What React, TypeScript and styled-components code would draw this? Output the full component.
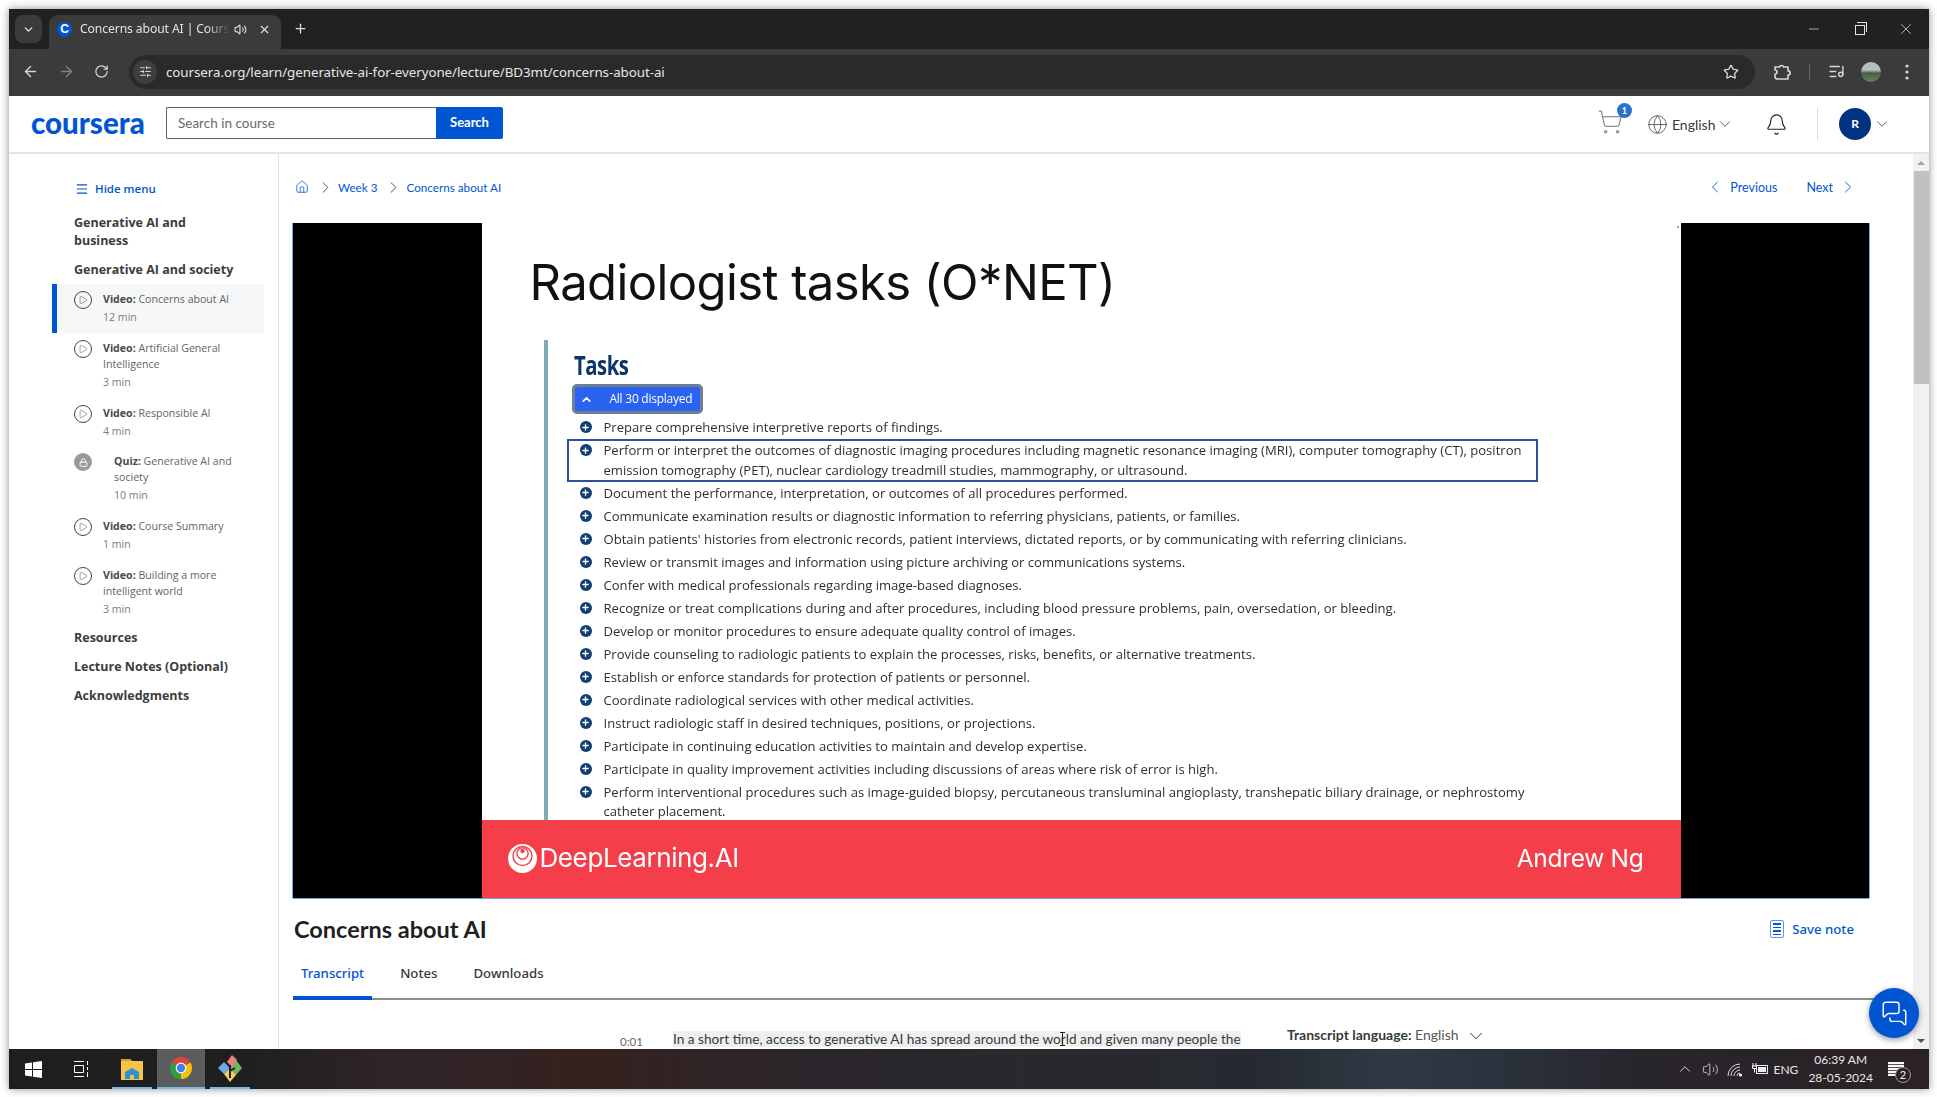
import React from "react";
import styled, { createGlobalStyle } from "styled-components";
import {
  ArrowLeft,
  ArrowRight,
  RotateCw,
  Star,
  ChevronDown,
  ChevronUp,
  ChevronLeft,
  ChevronRight,
  Bell,
  Globe,
  ShoppingCart,
  Home,
  Menu,
  Plus,
  X,
  Minus,
  Volume2,
  SlidersHorizontal,
  ListMusic,
  MessagesSquare,
  Lock,
  Play,
} from "lucide-react";

const UI_FONT = `"Lato", "Noto Sans", sans-serif`;
const SIDE_FONT = `"Open Sans", "Noto Sans", sans-serif`;

const GlobalStyle = createGlobalStyle`
  html, body { margin: 0; padding: 0; background: #fff; overflow: hidden; }
  * { box-sizing: border-box; }
`;

// Window frame
const Desktop = styled.div`
  width: 1937px;
  height: 1097px;
  padding: 9px 8px 8px 9px;
  background: #fff;
`;

const Win = styled.div`
  position: relative;
  width: 1920px;
  height: 1080px;
  display: flex;
  flex-direction: column;
  overflow: hidden;
  box-shadow: 0 0 8px rgba(0, 0, 0, 0.45);
  font-family: ${UI_FONT};
`;

// Chrome browser parts
const TabStrip = styled.div`
  height: 40px;
  flex: none;
  background: #202222;
  display: flex;
  align-items: flex-start;
  padding: 6px 0 0 6px;
  color: #e3e3e3;
`;

const TabMenu = styled.div`
  width: 27px;
  height: 28px;
  border-radius: 8px;
  background: #3b3b3b;
  display: flex;
  align-items: center;
  justify-content: center;
`;

const Tab = styled.div`
  width: 232px;
  height: 34px;
  margin-left: 7px;
  background: #3b3b3b;
  border-radius: 9px 9px 0 0;
  display: flex;
  align-items: center;
  padding: 0 8px 6px;
`;

const Favicon = styled.span`
  width: 15px;
  height: 15px;
  border-radius: 50%;
  background: #0056d2;
  color: #fff;
  font: 700 12px/15px "Liberation Sans", sans-serif;
  text-align: center;
  flex: none;
`;

const TabTitle = styled.span`
  margin-left: 8px;
  width: 150px;
  font: 12.2px/16px "Noto Sans", sans-serif;
  letter-spacing: -0.12px;
  white-space: nowrap;
  overflow: hidden;
  mask-image: linear-gradient(90deg, #000 85%, transparent);
`;

const TabIcons = styled.div`
  display: flex;
  align-items: center;
  gap: 11px;
  margin-left: 4px;
`;

const NewTab = styled.div`
  margin: 6px 0 0 12px;
  display: flex;
`;

const WinControls = styled.div`
  margin-left: auto;
  display: flex;
  align-items: center;
  height: 28px;
`;

const WinSlot = styled.span`
  width: 46px;
  display: flex;
  align-items: center;
  justify-content: center;
`;

const RestoreIcon = styled.span`
  position: relative;
  width: 10px;
  height: 10px;
  margin-top: 2px;
  border: 1px solid #e3e3e3;
  &::after {
    content: "";
    position: absolute;
    left: 1px;
    top: -4px;
    width: 9px;
    height: 9px;
    border-top: 1px solid #e3e3e3;
    border-right: 1px solid #e3e3e3;
  }
`;

const Toolbar = styled.div`
  height: 47px;
  flex: none;
  background: #3b3b3b;
  display: flex;
  align-items: center;
  padding: 0 0 2px 13px;
  color: #d6d6d6;
`;

const NavButton = styled.span<{ $dim?: boolean }>`
  width: 36px;
  display: flex;
  justify-content: flex-start;
  opacity: ${({ $dim }) => ($dim ? 0.45 : 1)};
`;

const Omnibox = styled.div`
  width: 1626px;
  height: 34px;
  margin-left: -1px;
  border-radius: 17px;
  background: #2a2a2a;
  display: flex;
  align-items: center;
  padding: 0 16px 0 4px;
`;

const SiteInfo = styled.span`
  width: 24px;
  height: 24px;
  border-radius: 50%;
  background: #3e3e3e;
  display: flex;
  align-items: center;
  justify-content: center;
  flex: none;
`;

const Url = styled.span`
  margin-left: 9px;
  flex: 1;
  font: 13.35px/20px "Noto Sans", sans-serif;
  letter-spacing: -0.06px;
  color: #e6e6e6;
`;

const ToolIcons = styled.div`
  display: flex;
  align-items: center;
  margin-left: 18px;
`;

const ToolDivider = styled.span`
  width: 1px;
  height: 16px;
  background: #666;
  margin: 0 18px 0 18px;
`;

const ProfilePic = styled.span`
  width: 20px;
  height: 20px;
  border-radius: 50%;
  margin: 0 23.5px 0 16px;
  background: linear-gradient(180deg, #b5c0bc 0 40%, #4d5a50 55%, #5d8d48 100%);
`;

// Coursera header
const SiteHeader = styled.header`
  height: 58px;
  flex: none;
  display: flex;
  align-items: center;
  background: #fff;
  border-bottom: 2px solid #e4e4e4;
  padding: 0 0 2px 22px;
`;

const Logo = styled.span`
  width: 135px;
  font: 900 29.5px/30px "Lato", sans-serif;
  letter-spacing: 0;
  color: #0056d2;
`;

const SearchBox = styled.div`
  width: 270px;
  height: 32px;
  border: 1px solid #636363;
  border-right: none;
  border-radius: 2px 0 0 2px;
  padding-left: 11px;
  font-size: 13.5px;
  line-height: 30px;
  color: #6a6a6a;
`;

const SearchButton = styled.div`
  width: 67px;
  height: 32px;
  background: #0056d2;
  border-radius: 0 2px 2px 0;
  color: #fff;
  text-align: center;
  font-size: 13px;
  font-weight: 700;
  line-height: 31px;
`;

const HeaderRight = styled.div`
  margin: 2px 0 0 auto;
  display: flex;
  align-items: center;
  color: #373a3c;
`;

const CartWrap = styled.div`
  position: relative;
  display: flex;
  margin: -5px 24px 0 0;
`;

const CartBadge = styled.span`
  position: absolute;
  right: -9px;
  top: -6px;
  width: 15px;
  height: 15px;
  border-radius: 50%;
  background: #2a73cc;
  color: #fff;
  font-size: 9px;
  font-weight: 700;
  line-height: 15px;
  text-align: center;
`;

const LangLabel = styled.span`
  margin: 0 0.5px 0 4px;
  font-size: 14px;
`;

const HeaderGap = styled.span`
  width: 31px;
`;

const HeaderDivider = styled.span`
  width: 1px;
  height: 32px;
  background: #dcdcdc;
  margin: 0 21px 0 29px;
`;

const UserAvatar = styled.span`
  width: 32px;
  height: 32px;
  border-radius: 50%;
  background: #00337f;
  color: #fff;
  font-size: 12px;
  font-weight: 700;
  line-height: 32px;
  text-align: center;
  margin-right: 2px;
`;

const UserChevron = styled.span`
  display: flex;
  margin-right: 38px;
`;

// Main area
const Main = styled.main`
  flex: 1;
  min-height: 0;
  display: flex;
  background: #fff;
  overflow: hidden;
`;

const Sidebar = styled.aside`
  width: 270px;
  flex: none;
  border-right: 1px solid #e1e1e1;
  padding: 26px 0 0 43px;
  font-family: ${SIDE_FONT};
  color: #373a3c;
`;

const HideMenu = styled.div`
  display: flex;
  align-items: center;
  gap: 6px;
  margin: 0 0 16px 23px;
  font-size: 11.5px;
  font-weight: 600;
  line-height: 18px;
  color: #0056d2;
`;

const SectionTitle = styled.div<{ $after?: number }>`
  width: 195px;
  margin: 0 0 ${({ $after }) => $after ?? 11}px 22px;
  font-size: 12.5px;
  font-weight: 700;
  line-height: 18px;
  color: #3c3c3c;
`;

const Item = styled.div<{ $active?: boolean; $quiz?: boolean }>`
  width: 212px;
  display: flex;
  padding: ${({ $quiz }) => ($quiz ? 6 : 7)}px 8px 6px 17px;
  background: ${({ $active }) => ($active ? "#f5f7f8" : "transparent")};
  border-left: 5px solid ${({ $active }) => ($active ? "#0056d2" : "transparent")};
`;

const ItemIcon = styled.span<{ $quiz?: boolean }>`
  width: ${({ $quiz }) => ($quiz ? 40 : 29)}px;
  flex: none;
`;

const PlayRing = styled.span`
  width: 18px;
  height: 18px;
  border: 1px solid #444;
  border-radius: 50%;
  display: flex;
  align-items: center;
  justify-content: center;
  color: #444;
`;

const LockDot = styled.span`
  width: 18px;
  height: 18px;
  border-radius: 50%;
  background: #9a9a9a;
  display: flex;
  align-items: center;
  justify-content: center;
`;

const ItemTitle = styled.div`
  font-size: 10.6px;
  line-height: 16px;
  color: #636363;
  b {
    font-weight: 700;
    color: #4a4a4a;
  }
`;

const ItemTime = styled.div`
  font-size: 10.6px;
  line-height: 20px;
  color: #7c7c7c;
`;

const ResourceList = styled.div`
  margin-top: 4px;
`;

const Content = styled.section`
  flex: 1;
  min-width: 0;
  padding: 22px 0 0 14px;
  overflow: hidden;
`;

const Crumbs = styled.nav`
  height: 22px;
  width: 1565px;
  display: flex;
  align-items: center;
  font-size: 11.7px;
  color: #0056d2;
  margin-bottom: 25px;
`;

const HomeLink = styled.span`
  display: flex;
  margin-left: 2px;
`;

const CrumbLink = styled.span`
  white-space: nowrap;
`;

const CrumbSep = styled.span`
  color: #333;
  display: flex;
  margin: 0 3.5px 0 6.5px;
`;

const Pager = styled.div`
  margin-left: auto;
  display: flex;
  align-items: center;
  gap: 5px;
  font-size: 12.5px;
`;

const PagerGap = styled.span`
  margin-right: 24px;
`;

// Video with its slide
const Video = styled.div`
  width: 1576px;
  height: 675px;
  display: flex;
  background: #000;
  box-shadow: -1px 0 0 #7aa5ee, 1px 0 0 #7aa5ee, 0 1px 0 #7aa5ee;
`;

const Pillar = styled.div`
  flex: 1;
`;

const Slide = styled.div`
  position: relative;
  width: 1199px;
  height: 675px;
  flex: none;
  display: flex;
  flex-direction: column;
  background: #fff;
  overflow: hidden;
  filter: blur(0.3px);
  &::after {
    content: "";
    position: absolute;
    right: 2px;
    top: 3px;
    width: 2px;
    height: 2px;
    background: #e8935a;
  }
`;

const SlideBody = styled.div`
  flex: 1;
  min-height: 0;
  overflow: hidden;
  padding: 30px 0 0 48px;
`;

const SlideTitle = styled.h1`
  margin: 0 0 27px;
  font: 400 49px/60px "Inter", sans-serif;
  letter-spacing: -0.6px;
  color: #111;
`;

const TaskPanel = styled.div`
  margin-left: 14px;
  height: 480px;
  border-left: 4px solid #7fabb6;
  padding: 8px 0 0 26px;
`;

const TasksHeading = styled.div`
  font: 700 27px/34px "Open Sans", sans-serif;
  letter-spacing: -0.6px;
  color: #0b356b;
  transform: scaleX(0.75);
  transform-origin: left center;
`;

const DisplayedButton = styled.div`
  width: 131px;
  height: 30px;
  margin: 2px 0 4px -2px;
  display: flex;
  align-items: center;
  gap: 17px;
  padding-left: 5px;
  background: #2a62f2;
  border: 3px solid #6d7f92;
  border-radius: 5px;
  color: #fff;
  font: 12px/16px "Open Sans", sans-serif;
  letter-spacing: -0.25px;
`;

const TaskList = styled.ul`
  list-style: none;
  margin: 0 0 0 -5px;
  padding: 0;
  display: flex;
  flex-direction: column;
  gap: 3.3px;
`;

const TaskRow = styled.li<{ $boxed?: boolean }>`
  width: 967px;
  display: flex;
  gap: 12px;
  padding-left: 11px;
  font: 13.08px/19.7px "Open Sans", sans-serif;
  color: #2e2e2e;
  white-space: pre-line;
  outline: ${({ $boxed }) => ($boxed ? "2px solid #2f4fa5" : "none")};
`;

const Bullet = styled.span`
  width: 12px;
  height: 12px;
  margin-top: 3px;
  flex: none;
  border-radius: 50%;
  background: #123f76;
  color: #fff;
  display: flex;
  align-items: center;
  justify-content: center;
`;

const SlideFooter = styled.div`
  height: 78px;
  flex: none;
  background: #f43f4b;
  display: flex;
  align-items: center;
  justify-content: space-between;
  padding: 0 37px 2px 26px;
  color: #fff;
`;

const Brand = styled.div`
  display: flex;
  align-items: center;
  gap: 3px;
  font: 400 26px/34px "Inter", sans-serif;
  letter-spacing: -0.4px;
`;

const Presenter = styled.div`
  font: 400 24.5px/34px "Inter", sans-serif;
  letter-spacing: -0.3px;
`;

// Below the video
const TitleRow = styled.div`
  width: 1561px;
  margin-top: 16px;
  height: 33px;
  display: flex;
  align-items: center;
  justify-content: space-between;
`;

const LectureTitle = styled.h2`
  margin: 0 0 3px 1px;
  font-size: 23.5px;
  font-weight: 700;
  line-height: 32px;
  color: #1f1f1f;
`;

const SaveNote = styled.div`
  display: flex;
  align-items: center;
  gap: 8px;
  margin-bottom: 3px;
  font: 500 13.2px/20px "Noto Sans", sans-serif;
  color: #0056d2;
`;

const NoteIcon = styled.span`
  width: 14px;
  height: 18px;
  border: 1px solid #5f97e6;
  border-radius: 2px;
  display: flex;
  flex-direction: column;
  align-items: center;
  justify-content: center;
  gap: 2px;
  i {
    width: 8px;
    height: 1.5px;
    background: #0056d2;
  }
`;

const TabBar = styled.div`
  width: 1582px;
  display: flex;
  border-bottom: 2px solid #8d8d8d;
  height: 53px;
`;

const PageTab = styled.div<{ $active?: boolean }>`
  height: 53px;
  margin-right: 20px;
  padding: 16px 8px 0;
  font: 500 13.2px/20px "Noto Sans", sans-serif;
  color: ${({ $active }) => ($active ? "#0056d2" : "#373a3c")};
  border-bottom: 4px solid ${({ $active }) => ($active ? "#0056d2" : "transparent")};
`;

const TranscriptRow = styled.div`
  display: flex;
  padding: 23px 0 0 327px;
`;

const Stamp = styled.span`
  width: 53px;
  margin-top: 9px;
  font-size: 11.5px;
  line-height: 20px;
  color: #666;
`;

const TranscriptLine = styled.p`
  width: 580px;
  margin: 6px 0 0;
  font-size: 13.65px;
  line-height: 20px;
  color: #373a3c;
  span {
    background: #efefef;
  }
`;

const LanguagePick = styled.div`
  margin: 2px 0 0 34px;
  display: flex;
  align-items: flex-start;
  gap: 6px;
  font-size: 14px;
  line-height: 20px;
  color: #555;
  white-space: nowrap;
  b {
    font-weight: 700;
    color: #373a3c;
  }
`;

const Scrollbar = styled.div`
  width: 16px;
  flex: none;
  background: #f1f1f1;
  display: flex;
  flex-direction: column;
  justify-content: space-between;
`;

const ScrollTop = styled.div`
  display: flex;
  flex-direction: column;
`;

const ScrollArrow = styled.span<{ $down?: boolean }>`
  height: 17px;
  display: flex;
  align-items: center;
  justify-content: center;
  &::before {
    content: "";
    border-left: 4px solid transparent;
    border-right: 4px solid transparent;
    ${({ $down }) =>
      $down ? "border-top: 4px solid #505050;" : "border-bottom: 4px solid #a3a3a3;"}
  }
`;

const ScrollThumb = styled.span`
  height: 213px;
  margin-left: 1px;
  background: #c1c1c1;
`;

const ChatFab = styled.div`
  position: absolute;
  right: 10px;
  bottom: 51px;
  width: 50px;
  height: 50px;
  border-radius: 50%;
  background: #0056d2;
  color: #fff;
  display: flex;
  align-items: center;
  justify-content: center;
  box-shadow: 0 2px 6px rgba(0, 0, 0, 0.4);
`;

const TextCursor = styled.span`
  position: absolute;
  left: 1053px;
  top: 1023px;
  width: 1px;
  height: 14px;
  background: #222;
  &::before,
  &::after {
    content: "";
    position: absolute;
    left: -2px;
    width: 5px;
    height: 1px;
    background: #222;
  }
  &::before {
    top: 0;
  }
  &::after {
    bottom: 0;
  }
`;

// Windows taskbar
const Taskbar = styled.footer`
  height: 40px;
  flex: none;
  display: flex;
  align-items: center;
  position: relative;
  z-index: 1;
  background: linear-gradient(
    90deg,
    #1d1e1f 0%,
    #1f1f20 12%,
    #2f2429 20%,
    #35211f 30%,
    #2b262b 42%,
    #28292e 55%,
    #262a30 65%,
    #2f3a46 72%,
    #2b3540 76%,
    #28252b 85%,
    #2a2226 100%
  );
  color: #f0f0f0;
`;

const StartSlot = styled.span`
  width: 48px;
  height: 40px;
  display: flex;
  align-items: center;
  justify-content: center;
`;

const Apps = styled.div`
  display: flex;
  gap: 5px;
  margin-left: 7px;
`;

const AppSlot = styled.span<{ $active?: boolean }>`
  width: ${({ $active }) => ($active ? 48 : 40)}px;
  height: 40px;
  display: flex;
  align-items: center;
  justify-content: center;
  background: ${({ $active }) => ($active ? "#5b5c5e" : "transparent")};
  border-bottom: 2px solid #76b9ed;
`;

const Tray = styled.div`
  margin-left: auto;
  display: flex;
  align-items: center;
  height: 40px;
  color: #e8e8e8;
`;

const TrayIcons = styled.div`
  display: flex;
  align-items: center;
  gap: 8px;
  margin-right: 6px;
`;

const TrayLang = styled.span`
  font-size: 12px;
  margin-right: 10px;
`;

const Clock = styled.div`
  font-size: 12px;
  line-height: 18px;
  text-align: center;
`;

const NotifyWrap = styled.div`
  position: relative;
  margin: 0 25px 0 15px;
  width: 16px;
  height: 14px;
  background: repeating-linear-gradient(180deg, #f4f4f4 0 2px, #555 2px 3px);
`;

const NotifyCount = styled.span`
  position: absolute;
  left: 7px;
  top: 5px;
  width: 16px;
  height: 16px;
  border-radius: 50%;
  border: 1px solid #999;
  background: #2b2226;
  font-size: 11px;
  line-height: 14px;
  text-align: center;
  color: #f0f0f0;
`;

const ExtensionIcon = () => (
  <svg width="18" height="18" viewBox="0 0 18 18" fill="none" stroke="currentColor" strokeWidth="1.6" strokeLinejoin="round">
    <path d="M2 4h4.4a2.2 2.2 0 0 1 4.2 0H15v3.9a2.1 2.1 0 0 1 0 4.2V16H4.6A2.6 2.6 0 0 1 2 13.4V11a2 2 0 0 0 0-4z" />
  </svg>
);

const NetworkIcon = () => (
  <svg width="16" height="16" viewBox="0 0 16 16" fill="none" stroke="#d8d8d8" strokeWidth="1">
    <path d="M1 15A12 12 0 0 1 13 3M4 15a9 9 0 0 1 9-9M7 15a6 6 0 0 1 6-6M10 15a3 3 0 0 1 3-3" />
    <circle cx="13.5" cy="14" r="1.5" fill="#fff" stroke="none" />
  </svg>
);

const BatteryIcon = () => (
  <svg width="17" height="16" viewBox="0 0 17 16" fill="none" stroke="#eee" strokeWidth="1">
    <rect x="5.5" y="4.5" width="11" height="8" />
    <rect x="7" y="6" width="8" height="5" fill="#eee" stroke="none" />
    <path d="M1 5h5M2 2v3M5 2v3M1.5 5v2.5h4V5M3.5 7.5v4" stroke="#fff" />
  </svg>
);

const WindowsLogo = () => (
  <svg width="17" height="17" viewBox="0 0 17 17" fill="#fff">
    <path d="M0 2.4 7 1.4V8H0zM8 1.2 17 0V8H8zM0 9h7v6.6L0 14.6zM8 9h9v8l-9-1.2z" />
  </svg>
);

const TaskViewIcon = () => (
  <svg width="16" height="18" viewBox="0 0 16 18" fill="none" stroke="#fff" strokeWidth="1">
    <path d="M1 1.5h10M1 16.5h10M1.5 5.5h9v7h-9zM14.5 1v4M14.5 7v3M14.5 12v5" />
  </svg>
);

const ExplorerIcon = () => (
  <svg width="22" height="24" viewBox="0 0 22 24">
    <path d="M0 3h9l2 2h11v19H0z" fill="#f6c445" />
    <path d="M0 3h9l2 2H0z" fill="#d99a25" />
    <path d="M4 23v-7l7-4 7 4v7h-5v-4H9v4z" fill="#2f8fd8" />
  </svg>
);

const ChromeIcon = () => (
  <svg width="24" height="24" viewBox="0 0 24 24">
    <path d="M12 12 2.47 6.5A11 11 0 0 1 21.53 6.5z" fill="#db4437" />
    <path d="M12 12 21.53 6.5A11 11 0 0 1 12 23z" fill="#f4c20d" />
    <path d="M12 12 12 23A11 11 0 0 1 2.47 6.5z" fill="#2f9e44" />
    <circle cx="12" cy="12" r="5.4" fill="#fff" />
    <circle cx="12" cy="12" r="4.2" fill="#3f7fe6" />
  </svg>
);

const ForkIcon = () => (
  <svg width="24" height="28" viewBox="0 0 24 28">
    <path d="M12 14 18 6l6 8-6 7z" fill="#6cb85a" />
    <path d="M0 14l6-6 6 6-6 6z" fill="#6ea8ee" />
    <path d="M6 20l6-6 6 7-6 7z" fill="#f0d060" />
    <path d="M9 8l5-7 5 5-5 7z" fill="#ee7f7f" />
    <path d="M12 24V11M12 17l5-3" stroke="#222" strokeWidth="2" fill="none" />
  </svg>
);

const DeepLearningMark = () => (
  <svg width="29" height="29" viewBox="0 0 29 29">
    <circle cx="14.5" cy="14.5" r="14.5" fill="#fff" />
    <circle cx="14.5" cy="12" r="9.5" fill="none" stroke="#f43f4b" strokeWidth="1.4" />
    <circle cx="14.5" cy="9.5" r="5.6" fill="none" stroke="#f43f4b" strokeWidth="1.4" />
    <circle cx="14.5" cy="7" r="2.2" fill="#f43f4b" />
  </svg>
);

const tasks: { text: string; boxed?: boolean }[] = [
  { text: "Prepare comprehensive interpretive reports of findings." },
  {
    text: "Perform or interpret the outcomes of diagnostic imaging procedures including magnetic resonance imaging (MRI), computer tomography (CT), positron\nemission tomography (PET), nuclear cardiology treadmill studies, mammography, or ultrasound.",
    boxed: true,
  },
  { text: "Document the performance, interpretation, or outcomes of all procedures performed." },
  { text: "Communicate examination results or diagnostic information to referring physicians, patients, or families." },
  { text: "Obtain patients' histories from electronic records, patient interviews, dictated reports, or by communicating with referring clinicians." },
  { text: "Review or transmit images and information using picture archiving or communications systems." },
  { text: "Confer with medical professionals regarding image-based diagnoses." },
  { text: "Recognize or treat complications during and after procedures, including blood pressure problems, pain, oversedation, or bleeding." },
  { text: "Develop or monitor procedures to ensure adequate quality control of images." },
  { text: "Provide counseling to radiologic patients to explain the processes, risks, benefits, or alternative treatments." },
  { text: "Establish or enforce standards for protection of patients or personnel." },
  { text: "Coordinate radiological services with other medical activities." },
  { text: "Instruct radiologic staff in desired techniques, positions, or projections." },
  { text: "Participate in continuing education activities to maintain and develop expertise." },
  { text: "Participate in quality improvement activities including discussions of areas where risk of error is high." },
  { text: "Perform interventional procedures such as image-guided biopsy, percutaneous transluminal angioplasty, transhepatic biliary drainage, or nephrostomy\ncatheter placement." },
];

const lessons = [
  { kind: "Video", title: "Concerns about AI", time: "12 min", active: true },
  { kind: "Video", title: "Artificial General Intelligence", time: "3 min" },
  { kind: "Video", title: "Responsible AI", time: "4 min" },
  { kind: "Quiz", title: "Generative AI and society", time: "10 min" },
  { kind: "Video", title: "Course Summary", time: "1 min" },
  { kind: "Video", title: "Building a more intelligent world", time: "3 min" },
];

export default function App() {
  return (
    <Desktop>
      <GlobalStyle />
      <Win>
        <TabStrip>
          <TabMenu>
            <ChevronDown size={13} strokeWidth={2.5} />
          </TabMenu>
          <Tab>
            <Favicon>C</Favicon>
            <TabTitle>Concerns about AI | Coursera</TabTitle>
            <TabIcons>
              <Volume2 size={13} />
              <X size={13} />
            </TabIcons>
          </Tab>
          <NewTab>
            <Plus size={15} />
          </NewTab>
          <WinControls>
            <WinSlot>
              <Minus size={16} strokeWidth={1} />
            </WinSlot>
            <WinSlot>
              <RestoreIcon />
            </WinSlot>
            <WinSlot>
              <X size={18} strokeWidth={1} />
            </WinSlot>
          </WinControls>
        </TabStrip>

        <Toolbar>
          <NavButton>
            <ArrowLeft size={17} />
          </NavButton>
          <NavButton $dim>
            <ArrowRight size={17} />
          </NavButton>
          <NavButton>
            <RotateCw size={15} />
          </NavButton>
          <Omnibox>
            <SiteInfo>
              <SlidersHorizontal size={13} />
            </SiteInfo>
            <Url>coursera.org/learn/generative-ai-for-everyone/lecture/BD3mt/concerns-about-ai</Url>
            <Star size={16} />
          </Omnibox>
          <ToolIcons>
            <ExtensionIcon />
            <ToolDivider />
            <ListMusic size={17} />
            <ProfilePic />
            <svg width="4" height="16" viewBox="0 0 4 16" fill="#d6d6d6">
              <circle cx="2" cy="2" r="1.6" />
              <circle cx="2" cy="8" r="1.6" />
              <circle cx="2" cy="14" r="1.6" />
            </svg>
          </ToolIcons>
        </Toolbar>

        <SiteHeader>
          <Logo>coursera</Logo>
          <SearchBox>Search in course</SearchBox>
          <SearchButton>Search</SearchButton>
          <HeaderRight>
            <CartWrap>
              <ShoppingCart size={26} strokeWidth={1.2} color="#8f8f8f" />
              <CartBadge>1</CartBadge>
            </CartWrap>
            <Globe size={21} strokeWidth={1} color="#555" />
            <LangLabel>English</LangLabel>
            <ChevronDown size={18} strokeWidth={1.1} />
            <HeaderGap />
            <Bell size={23} strokeWidth={1.2} color="#222" />
            <HeaderDivider />
            <UserAvatar>R</UserAvatar>
            <UserChevron>
              <ChevronDown size={18} strokeWidth={1.1} />
            </UserChevron>
          </HeaderRight>
        </SiteHeader>

        <Main>
          <Sidebar>
            <HideMenu>
              <Menu size={14} color="#0056d2" />
              Hide menu
            </HideMenu>
            <SectionTitle>
              Generative AI and
              <br />
              business
            </SectionTitle>
            <SectionTitle $after={5}>Generative AI and society</SectionTitle>
            {lessons.map((l) => (
              <Item key={l.title} $active={l.active} $quiz={l.kind === "Quiz"}>
                <ItemIcon $quiz={l.kind === "Quiz"}>
                  {l.kind === "Quiz" ? (
                    <LockDot>
                      <Lock size={9} color="#fff" strokeWidth={2.5} />
                    </LockDot>
                  ) : (
                    <PlayRing>
                      <Play size={10} strokeWidth={1.2} />
                    </PlayRing>
                  )}
                </ItemIcon>
                <div>
                  <ItemTitle>
                    <b>{l.kind}:</b> {l.title}
                  </ItemTitle>
                  <ItemTime>{l.time}</ItemTime>
                </div>
              </Item>
            ))}
            <ResourceList>
              <SectionTitle>Resources</SectionTitle>
              <SectionTitle>Lecture Notes (Optional)</SectionTitle>
              <SectionTitle>Acknowledgments</SectionTitle>
            </ResourceList>
          </Sidebar>

          <Content>
            <Crumbs>
              <HomeLink>
                <Home size={14} strokeWidth={1.3} />
              </HomeLink>
              <CrumbSep>
                <ChevronRight size={19} strokeWidth={1.1} />
              </CrumbSep>
              <CrumbLink>Week 3</CrumbLink>
              <CrumbSep>
                <ChevronRight size={19} strokeWidth={1.1} />
              </CrumbSep>
              <CrumbLink>Concerns about AI</CrumbLink>
              <Pager>
                <ChevronLeft size={20} strokeWidth={1.1} />
                <PagerGap>Previous</PagerGap>
                <span>Next</span>
                <ChevronRight size={20} strokeWidth={1.1} />
              </Pager>
            </Crumbs>

            <Video>
              <Pillar />
              <Slide>
                <SlideBody>
                  <SlideTitle>Radiologist tasks (O*NET)</SlideTitle>
                  <TaskPanel>
                    <TasksHeading>Tasks</TasksHeading>
                    <DisplayedButton>
                      <ChevronUp size={13} strokeWidth={3} />
                      All 30 displayed
                    </DisplayedButton>
                    <TaskList>
                      {tasks.map((t) => (
                        <TaskRow key={t.text} $boxed={t.boxed}>
                          <Bullet>
                            <Plus size={9} strokeWidth={3.5} />
                          </Bullet>
                          <span>{t.text}</span>
                        </TaskRow>
                      ))}
                    </TaskList>
                  </TaskPanel>
                </SlideBody>
                <SlideFooter>
                  <Brand>
                    <DeepLearningMark />
                    DeepLearning.AI
                  </Brand>
                  <Presenter>Andrew Ng</Presenter>
                </SlideFooter>
              </Slide>
              <Pillar />
            </Video>

            <TitleRow>
              <LectureTitle>Concerns about AI</LectureTitle>
              <SaveNote>
                <NoteIcon>
                  <i />
                  <i />
                  <i />
                  <i />
                </NoteIcon>
                Save note
              </SaveNote>
            </TitleRow>

            <TabBar>
              <PageTab $active>Transcript</PageTab>
              <PageTab>Notes</PageTab>
              <PageTab>Downloads</PageTab>
            </TabBar>

            <TranscriptRow>
              <Stamp>0:01</Stamp>
              <TranscriptLine>
                <span>In a short time, access to generative AI has spread around the world and given many people the</span>
              </TranscriptLine>
              <LanguagePick>
                <span>
                  <b>Transcript language:</b> English
                </span>
                <ChevronDown size={22} strokeWidth={1.1} />
              </LanguagePick>
            </TranscriptRow>
          </Content>

          <Scrollbar>
            <ScrollTop>
              <ScrollArrow />
              <ScrollThumb />
            </ScrollTop>
            <ScrollArrow $down />
          </Scrollbar>
        </Main>

        <ChatFab>
          <MessagesSquare size={27} strokeWidth={1.3} />
        </ChatFab>
        <TextCursor />

        <Taskbar>
          <StartSlot>
            <WindowsLogo />
          </StartSlot>
          <StartSlot>
            <TaskViewIcon />
          </StartSlot>
          <Apps>
            <AppSlot>
              <ExplorerIcon />
            </AppSlot>
            <AppSlot $active>
              <ChromeIcon />
            </AppSlot>
            <AppSlot>
              <ForkIcon />
            </AppSlot>
          </Apps>
          <Tray>
            <TrayIcons>
              <ChevronUp size={18} strokeWidth={1.2} />
              <Volume2 size={17} strokeWidth={1.1} />
              <NetworkIcon />
              <BatteryIcon />
            </TrayIcons>
            <TrayLang>ENG</TrayLang>
            <Clock>
              06:39 AM
              <br />
              28-05-2024
            </Clock>
            <NotifyWrap>
              <NotifyCount>2</NotifyCount>
            </NotifyWrap>
          </Tray>
        </Taskbar>
      </Win>
    </Desktop>
  );
}
